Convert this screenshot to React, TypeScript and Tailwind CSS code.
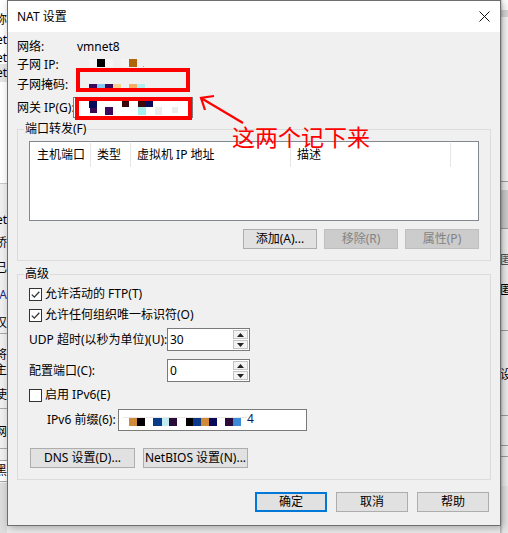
import React from "react";

type R = [number, number, number, number, string];

function Mosaic({ w, h, rects }: { w: number; h: number; rects: R[] }) {
  return (
    <svg width={w} height={h} className="absolute left-0 top-0" shapeRendering="crispEdges">
      {rects.map(([x, y, rw, rh, c], i) => (
        <rect key={i} x={x} y={y} width={rw} height={rh} fill={c} />
      ))}
    </svg>
  );
}

function Btn({
  children,
  w,
  disabled,
  primary,
}: {
  children: React.ReactNode;
  w: string;
  disabled?: boolean;
  primary?: boolean;
}) {
  const base = "h-[20px] flex items-center justify-center leading-[16px] whitespace-nowrap " + w + " ";
  if (disabled) return <div className={base + "border border-[#bfbfbf] bg-[#cccccc] text-[#838383]"}>{children}</div>;
  if (primary) return <div className={base + "border-2 border-[#0078d7] bg-[#e1e1e1]"}>{children}</div>;
  return <div className={base + "border border-[#adadad] bg-[#e1e1e1]"}>{children}</div>;
}

function Check({ checked }: { checked?: boolean }) {
  return (
    <div className="w-[13px] h-[13px] shrink-0 border border-[#333333] bg-white flex items-center justify-center">
      {checked && (
        <svg width="11" height="11" viewBox="0 0 11 11">
          <path d="M1.8 5.6 L4.3 8.1 L9.3 2.8" stroke="#333" strokeWidth="1.3" fill="none" />
        </svg>
      )}
    </div>
  );
}

function Spinner({ value }: { value: string }) {
  return (
    <div className="w-[83px] h-[23px] shrink-0 border border-[#7a7a7a] bg-white flex">
      <div className="flex-1 flex items-center pl-[2px] leading-[16px]">{value}</div>
      <div className="w-[17px] flex flex-col bg-white">
        <div className="flex-1 border border-[#c4c4c4] bg-[#f3f3f3] flex items-center justify-center m-[1px] mb-0">
          <svg width="7" height="4" viewBox="0 0 7 4">
            <path d="M0 4 L3.5 0 L7 4 Z" fill="#222" />
          </svg>
        </div>
        <div className="flex-1 border border-[#c4c4c4] bg-[#f3f3f3] flex items-center justify-center m-[1px]">
          <svg width="7" height="4" viewBox="0 0 7 4">
            <path d="M0 0 L3.5 4 L7 0 Z" fill="#222" />
          </svg>
        </div>
      </div>
    </div>
  );
}

function Frag({ top, text, className = "" }: { top: number; text: string; className?: string }) {
  return (
    <div className={"absolute right-0 flex justify-end whitespace-nowrap leading-[16px] " + className} style={{ top }}>
      {text}
    </div>
  );
}

function LeftStrip() {
  return (
    <div className="absolute left-0 top-0 w-[7px] h-[533px] overflow-hidden bg-[#f0f0f0]">
      <div className="absolute left-0 top-0 w-full h-[183px] bg-white" />
      <div className="absolute left-0 top-[64px] w-full h-[18px] bg-[#e5e5e5]" />
      <div className="absolute left-0 top-[183px] w-full h-px bg-[#c8c8c8]" />
      <div className="absolute left-0 top-[333px] w-full h-px bg-[#a8a8a8]" />
      <div className="absolute left-0 top-[408px] w-full h-px bg-[#a8a8a8]" />
      <div className="absolute left-0 top-[448px] w-full h-px bg-[#a8a8a8]" />
      <div className="absolute left-0 top-[460px] w-full h-[22px] bg-white border-y border-[#a8a8a8]" />
      <div className="absolute left-0 top-[483px] w-full h-[50px] bg-[#dcdcdc]" />
      <Frag top={12} text="名称" />
      <Frag top={32} text="vmnet" />
      <Frag top={50} text="vmnet" />
      <Frag top={65} text="vmnet" />
      <Frag top={212} text="vmnet" />
      <Frag top={235} text="桥" />
      <Frag top={260} text="已" />
      <Frag top={287} text="NA" className="text-[#1a2a8a]" />
      <Frag top={315} text="仅" />
      <Frag top={347} text="将" />
      <Frag top={362} text="主" />
      <Frag top={387} text="使" />
      <Frag top={424} text="网" />
      <Frag top={463} text="黑" />
    </div>
  );
}

function RightStrip() {
  return (
    <div className="absolute right-0 top-0 w-[8px] h-[533px] overflow-hidden bg-[#f0f0f0]">
      <div className="absolute left-0 top-0 w-full h-[10px] bg-white" />
      <div className="absolute left-0 top-[10px] w-full h-[7px] bg-[#d9d9d9]" />
      <div className="absolute left-0 top-[17px] w-full h-[164px] bg-[#f7f7f7]" />
      <div className="absolute left-0 top-[181px] w-full h-px bg-[#a0a0a0]" />
      <div className="absolute left-0 top-[190px] w-full h-[38px] bg-[#cfcfcf]" />
      <div className="absolute left-0 top-[228px] w-full h-px bg-[#a0a0a0]" />
      <div className="absolute left-0 top-[330px] w-full h-px bg-[#a0a0a0]" />
      <div className="absolute left-0 top-[415px] w-full h-px bg-[#a0a0a0]" />
      <div className="absolute left-0 top-[445px] w-full h-px bg-[#a0a0a0]" />
      <div className="absolute left-0 top-[456px] w-full h-px bg-[#a0a0a0]" />
      <div className="absolute left-0 top-[486px] w-full h-[47px] bg-[#e6e6e6]" />
      <div className="absolute left-0 top-[252px] whitespace-nowrap leading-[16px] text-[#555]">匿</div>
      <div className="absolute left-0 top-[282px] whitespace-nowrap leading-[16px]">匿</div>
      <div className="absolute left-0 top-[367px] whitespace-nowrap leading-[16px]">设</div>
      <div className="absolute left-0 top-[0px] w-[3px] h-[533px] bg-gradient-to-r from-[rgba(0,0,0,0.25)] to-transparent" />
    </div>
  );
}

function Dialog() {
  return (
    <div className="absolute left-[7px] top-0 w-[494px] h-[526px] border border-[#6e6e6e] flex flex-col shadow-[2px_2px_8px_rgba(0,0,0,0.3)]">
      <div className="h-[31px] bg-white flex items-center justify-between pl-[9px] pr-[10px] shrink-0">
        <span className="leading-[16px]">NAT 设置</span>
        <svg width="11" height="11" viewBox="0 0 11 11">
          <path d="M0.5 0.5 L10.5 10.5 M10.5 0.5 L0.5 10.5" stroke="#111" strokeWidth="1" />
        </svg>
      </div>
      <div className="flex-1 bg-[#f0f0f0] px-[9px] flex flex-col">
        <div className="mt-[6px] h-[18px] flex items-center leading-[16px] whitespace-nowrap">
          <span className="w-[60px] shrink-0">网络:</span>
          <span>vmnet8</span>
        </div>
        <div className="h-[18px] flex items-center leading-[16px] whitespace-nowrap">
          <span className="w-[60px] shrink-0">子网 IP:</span>
          <div className="relative w-[120px] h-[18px]">
            <Mosaic
              w={120}
              h={18}
              rects={[
                [12, 3, 8, 8, "#f6f6f6"],
                [28, 3, 8, 8, "#f6f6f6"],
                [44, 3, 8, 8, "#f4f4f4"],
                [20, 3, 8, 8, "#000000"],
                [52, 3, 8, 8, "#b0640c"],
                [66, 10, 1, 1, "#c0a0a0"],
              ]}
            />
          </div>
        </div>
        <div className="mt-[2px] h-[18px] flex items-center leading-[16px] whitespace-nowrap">
          <span className="w-[60px] shrink-0">子网掩码:</span>
          <div className="relative w-[120px] h-[18px]">
            <Mosaic
              w={120}
              h={18}
              rects={[
                [0, 8, 2, 8, "#f5b060"],
                [12, 8, 8, 8, "#3a0a5c"],
                [20, 8, 8, 8, "#88c8f0"],
                [28, 8, 8, 8, "#3c0a5a"],
                [36, 8, 8, 8, "#f3d090"],
                [52, 8, 8, 8, "#f4ac68"],
                [60, 8, 8, 8, "#b0f0f0"],
              ]}
            />
          </div>
        </div>
        <div className="mt-[3px] h-[21px] flex items-center leading-[16px] whitespace-nowrap">
          <span className="w-[56px] shrink-0">网关 IP(G):</span>
          <div className="relative w-[120px] h-[21px] shrink-0 border border-[#7a7a7a] bg-white">
            <Mosaic
              w={118}
              h={19}
              rects={[
                [15, 2, 8, 8, "#0a0a5a"],
                [16, 10, 7, 5, "#3a0a50"],
                [31, 9, 8, 8, "#3c0a5c"],
                [48, 2, 7, 7, "#3a0808"],
                [64, 2, 8, 7, "#3a0808"],
                [72, 2, 7, 7, "#0a0a5a"],
                [64, 9, 8, 8, "#a8f0f0"],
                [81, 9, 7, 8, "#ececec"],
                [98, 9, 6, 6, "#ececec"],
              ]}
            />
          </div>
        </div>

        <fieldset className="mt-[4px] border border-[#dcdcdc] pb-[11px]">
          <legend className="ml-[6px] px-[1px] leading-[14px]">端口转发(F)</legend>
          <div className="mt-[5px] mx-[11px] h-[80px] border border-[#828790] bg-white">
            <div className="flex h-[26px] leading-[16px] whitespace-nowrap">
              <div className="w-[61px] flex items-center pl-[7px] relative">
                主机端口
                <div className="absolute right-0 top-[1px] h-[24px] w-px bg-[#e5e5e5]" />
              </div>
              <div className="w-[40px] flex items-center pl-[6px] relative">
                类型
                <div className="absolute right-0 top-[1px] h-[24px] w-px bg-[#e5e5e5]" />
              </div>
              <div className="w-[160px] flex items-center pl-[6px] relative">
                虚拟机 IP 地址
                <div className="absolute right-0 top-[1px] h-[24px] w-px bg-[#e5e5e5]" />
              </div>
              <div className="w-[160px] flex items-center pl-[6px] relative">
                描述
                <div className="absolute right-0 top-[1px] h-[24px] w-px bg-[#e5e5e5]" />
              </div>
            </div>
          </div>
          <div className="mt-[8px] mr-[11px] flex justify-end gap-[7px]">
            <Btn w="w-[74px]">添加(A)...</Btn>
            <Btn w="w-[74px]" disabled>
              移除(R)
            </Btn>
            <Btn w="w-[74px]" disabled>
              属性(P)
            </Btn>
          </div>
        </fieldset>

        <fieldset className="mt-[6px] border border-[#dcdcdc] pb-[11px]">
          <legend className="ml-[6px] px-[1px] leading-[14px]">高级</legend>
          <div className="mt-[5px] ml-[11px] h-[16px] flex items-center gap-[3px] leading-[16px] whitespace-nowrap">
            <Check checked />
            <span>允许活动的 FTP(T)</span>
          </div>
          <div className="mt-[5px] ml-[11px] h-[16px] flex items-center gap-[3px] leading-[16px] whitespace-nowrap">
            <Check checked />
            <span>允许任何组织唯一标识符(O)</span>
          </div>
          <div className="mt-[5px] ml-[11px] h-[23px] flex items-center leading-[16px] whitespace-nowrap">
            <span className="w-[138px] shrink-0">UDP 超时(以秒为单位)(U):</span>
            <Spinner value="30" />
          </div>
          <div className="mt-[8px] ml-[11px] h-[23px] flex items-center leading-[16px] whitespace-nowrap">
            <span className="w-[138px] shrink-0">配置端口(C):</span>
            <Spinner value="0" />
          </div>
          <div className="mt-[5px] ml-[11px] h-[16px] flex items-center gap-[3px] leading-[16px] whitespace-nowrap">
            <Check />
            <span>启用 IPv6(E)</span>
          </div>
          <div className="mt-[6px] ml-[29px] h-[22px] flex items-center leading-[16px] whitespace-nowrap">
            <span className="w-[71px] shrink-0">IPv6 前缀(6):</span>
            <div className="relative w-[189px] h-[22px] shrink-0 border border-[#7a7a7a] bg-white">
              <Mosaic
                w={187}
                h={20}
                rects={[
                  [4, 7, 124, 1, "#ece6e6"],
                  [10, 8, 8, 8, "#d08a3a"],
                  [18, 8, 8, 8, "#000000"],
                  [34, 8, 9, 8, "#0a3a8a"],
                  [43, 8, 7, 8, "#c0eef0"],
                  [50, 8, 8, 8, "#2a0a3a"],
                  [67, 8, 7, 8, "#000000"],
                  [74, 8, 8, 8, "#0a3a8a"],
                  [82, 8, 8, 8, "#d08a3a"],
                  [90, 8, 8, 8, "#0a0a5a"],
                  [106, 8, 8, 8, "#2a0a3a"],
                  [114, 8, 8, 8, "#3a8ad8"],
                ]}
              />
              <span className="absolute left-[128px] top-[1px] leading-[16px] text-[#0a1a5a]">4</span>
            </div>
          </div>
          <div className="mt-[17px] ml-[12px] flex gap-[8px]">
            <Btn w="w-[105px]">DNS 设置(D)...</Btn>
            <Btn w="w-[105px]">NetBIOS 设置(N)...</Btn>
          </div>
        </fieldset>

        <div className="mt-[12px] mr-[2px] flex justify-end gap-[9px]">
          <Btn w="w-[72px]" primary>
            确定
          </Btn>
          <Btn w="w-[72px]">取消</Btn>
          <Btn w="w-[72px]">帮助</Btn>
        </div>
      </div>
    </div>
  );
}

function Annotations() {
  return (
    <>
      <svg width="508" height="533" className="absolute left-0 top-0 pointer-events-none">
        <rect x="78" y="70" width="110" height="20" stroke="#ff0000" strokeWidth="4" fill="none" />
        <rect x="77" y="99" width="113" height="19" stroke="#ff0000" strokeWidth="4" fill="none" />
        <path d="M243 123 L201 98" stroke="#ff0000" strokeWidth="2.2" fill="none" />
        <path d="M214 96 L201 98 L205 110" stroke="#ff0000" strokeWidth="2.2" fill="none" />
      </svg>
      <div className="absolute left-[232px] top-[124px] text-[23px] leading-[26px] text-[#ff0000] whitespace-nowrap">
        这两个记下来
      </div>
    </>
  );
}

export default function App() {
  return (
    <div className="relative w-[508px] h-[533px] overflow-hidden bg-[#ececec] font-['Noto_Sans','Noto_Sans_CJK_SC',sans-serif] text-[12px] text-black">
      <LeftStrip />
      <RightStrip />
      <Dialog />
      <Annotations />
    </div>
  );
}
